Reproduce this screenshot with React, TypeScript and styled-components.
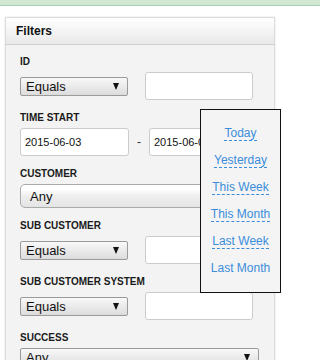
import { createGlobalStyle, styled } from "styled-components"

const GlobalStyle = createGlobalStyle`
  body {
    margin: 0;
    background: #fff;
    font-family: "Liberation Sans", Arial, sans-serif;
    color: #222;
  }
`

const TopBar = styled.div`
  height: 5px;
  background: #d2e8d5;
  border-bottom: 1px solid #a9d2b4;
`

const Page = styled.div`
  padding: 11px 0 0 5px;
`

const Panel = styled.section`
  width: 268px;
  min-height: 360px;
  background: #f3f3f3;
  border: 1px solid #dcdcdc;
  box-shadow: 0 0 2px rgba(0, 0, 0, 0.12);
`

const PanelHeader = styled.h3`
  margin: 0;
  height: 26px;
  line-height: 26px;
  padding-left: 10px;
  font-size: 12px;
  font-weight: bold;
  color: #111;
  background: linear-gradient(#ffffff, #e9e9e9);
  border-bottom: 1px solid #cfcfcf;
`

const PanelBody = styled.div`
  padding: 11px 14px 0;
  display: flex;
  flex-direction: column;
  gap: 12px;
`

const Group = styled.div<{ $overlay?: boolean }>`
  display: flex;
  flex-direction: column;
  gap: 4px;
  position: ${(p) => (p.$overlay ? "relative" : "static")};
`

const Label = styled.label`
  font-size: 10px;
  line-height: 12px;
  font-weight: bold;
  text-transform: uppercase;
  color: #1a1a1a;
`

const Row = styled.div`
  display: flex;
  align-items: center;
  height: 28px;
`

const FauxSelect = styled.div<{ $width: number; $tall?: boolean }>`
  box-sizing: border-box;
  width: ${(p) => p.$width}px;
  height: ${(p) => (p.$tall ? 24 : 19)}px;
  display: flex;
  align-items: center;
  justify-content: space-between;
  padding: 0 ${(p) => (p.$tall ? 8 : 8)}px 0 ${(p) => (p.$tall ? 9 : 5)}px;
  font-size: 13px;
  color: #111;
  border: 1px solid ${(p) => (p.$tall ? "#aaaaaa" : "#9a9a9a")};
  border-radius: ${(p) => (p.$tall ? 5 : 2)}px;
  background: ${(p) =>
    p.$tall
      ? "linear-gradient(#ffffff 20%, #eeeeee 50%, #e4e4e4)"
      : "linear-gradient(#f8f8f8, #dcdcdc)"};
`

const Caret = styled.span`
  width: 0;
  height: 0;
  border-left: 3.5px solid transparent;
  border-right: 3.5px solid transparent;
  border-top: 7px solid #111;
`

const TextInput = styled.div<{ $width: number }>`
  box-sizing: border-box;
  width: ${(p) => p.$width}px;
  height: 28px;
  padding: 0 4px;
  display: flex;
  align-items: center;
  font-size: 11px;
  color: #111;
  background: #fff;
  border: 1px solid #cccccc;
  border-radius: 3px;
  flex-shrink: 0;
`

const Dash = styled.span`
  width: 20px;
  text-align: center;
  font-size: 12px;
  color: #333;
`

const RangeMenu = styled.ul`
  position: absolute;
  left: 180px;
  top: -3px;
  box-sizing: border-box;
  width: 81px;
  height: 184px;
  margin: 0;
  padding: 10px 0 0;
  list-style: none;
  background: #f4f4f4;
  border: 1px solid #111;
  z-index: 2;
`

const RangeItem = styled.li`
  height: 27px;
  display: flex;
  align-items: center;
  justify-content: center;
`

const RangeLink = styled.a<{ $plain?: boolean }>`
  font-size: 12px;
  line-height: 14px;
  color: #3b8ddb;
  text-decoration: none;
  border-bottom: 1px dashed ${(p) => (p.$plain ? "transparent" : "#3b8ddb")};
  cursor: pointer;
`

const ranges = ["Today", "Yesterday", "This Week", "This Month", "Last Week", "Last Month"]

const OperatorField = ({ label }: { label: string }) => (
  <Group>
    <Label>{label}</Label>
    <Row>
      <FauxSelect $width={108}>
        Equals <Caret />
      </FauxSelect>
      <TextInput $width={108} style={{ marginLeft: 17 }} />
    </Row>
  </Group>
)

export default function App() {
  return (
    <>
      <GlobalStyle />
      <TopBar />
      <Page>
        <Panel>
          <PanelHeader>Filters</PanelHeader>
          <PanelBody>
            <OperatorField label="ID" />
            <Group $overlay>
              <Label>Time Start</Label>
              <Row>
                <TextInput $width={109}>2015-06-03</TextInput>
                <Dash>-</Dash>
                <TextInput $width={109}>2015-06-03</TextInput>
              </Row>
              <RangeMenu>
                {ranges.map((r) => (
                  <RangeItem key={r}>
                    <RangeLink $plain={r === "Last Month"}>{r}</RangeLink>
                  </RangeItem>
                ))}
              </RangeMenu>
            </Group>
            <Group>
              <Label>Customer</Label>
              <FauxSelect $width={240} $tall>
                Any <Caret />
              </FauxSelect>
            </Group>
            <OperatorField label="Sub Customer" />
            <OperatorField label="Sub Customer System" />
            <Group>
              <Label>Success</Label>
              <FauxSelect $width={239}>
                Any <Caret />
              </FauxSelect>
            </Group>
          </PanelBody>
        </Panel>
      </Page>
    </>
  )
}
